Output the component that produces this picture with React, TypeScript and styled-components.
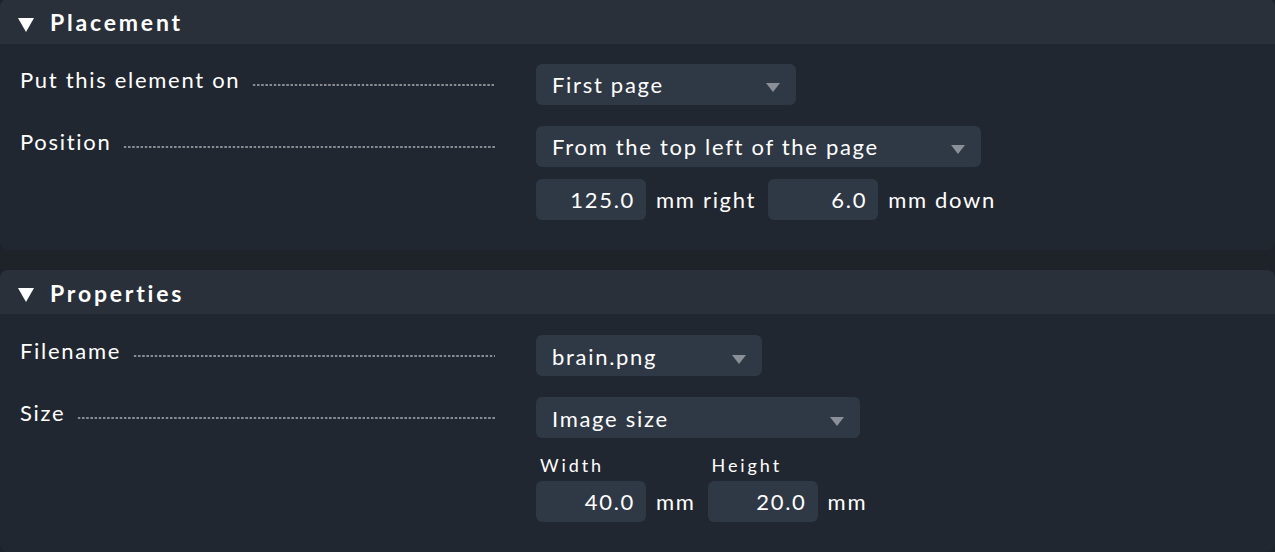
import React from 'react';
import styled, { createGlobalStyle } from 'styled-components';

const GlobalStyle = createGlobalStyle`
    html, body {
        margin: 0;
        padding: 0;
        background: #1e2229;
    }
    body {
        font-family: Lato, 'Open Sans', sans-serif;
        color: #ffffff;
    }
`;

const Page = styled.main`
    display: flex;
    flex-direction: column;
    gap: 20px;
    width: 1275px;
    height: 553px;
    margin-top: -1px;
    overflow: hidden;
`;

const Section = styled.section`
    display: flex;
    flex-direction: column;
    background: #212730;
    border-radius: 8px;
    overflow: hidden;
`;

const Header = styled.div`
    display: flex;
    align-items: center;
    gap: 16px;
    height: 45px;
    box-sizing: border-box;
    padding: 2px 0 0 18px;
    background: #29303a;
    font-size: 23px;
    font-weight: 700;
    letter-spacing: 2.8px;
`;

const Caret = styled.span`
    width: 0;
    height: 0;
    margin-top: 5px;
    border-left: 8px solid transparent;
    border-right: 8px solid transparent;
    border-top: 14px solid #ffffff;
`;

const Body = styled.div<{ $top: number }>`
    display: flex;
    flex-direction: column;
    gap: 21px;
    padding: ${p => p.$top}px 0 30px 20px;
`;

const Row = styled.div`
    display: flex;
    align-items: flex-start;
`;

const Label = styled.div`
    display: flex;
    align-items: baseline;
    gap: 12px;
    width: 475px;
    padding-top: 2px;
    font-size: 22px;
    letter-spacing: 1.7px;
    white-space: nowrap;
`;

const Leader = styled.span`
    flex: 1;
    height: 2px;
    transform: translateY(-2px);
    background-image: radial-gradient(circle, #878b92 1px, transparent 1.4px);
    background-size: 4.2px 2px;
`;

const Value = styled.div`
    display: flex;
    flex-direction: column;
    gap: 12px;
    margin-left: 41px;
`;

const Select = styled.div<{ $width: number }>`
    display: flex;
    align-items: center;
    justify-content: space-between;
    width: ${p => p.$width}px;
    height: 41px;
    box-sizing: border-box;
    padding: 1px 16px 0;
    background: #2f3845;
    border-radius: 6px;
    font-size: 22px;
    letter-spacing: 1.7px;
    white-space: nowrap;
`;

const Arrow = styled.span`
    flex: none;
    width: 0;
    height: 0;
    margin-top: 6px;
    border-left: 7px solid transparent;
    border-right: 7px solid transparent;
    border-top: 9px solid #8b9098;
`;

const Inline = styled.div`
    display: flex;
    align-items: center;
    gap: 10px;

    & > span + div {
        margin-left: 2px;
    }
`;

const Number = styled.div`
    width: 110px;
    height: 41px;
    box-sizing: border-box;
    padding-right: 11px;
    line-height: 42px;
    text-align: right;
    background: #2f3845;
    border-radius: 6px;
    font-size: 22px;
    letter-spacing: 1.7px;
`;

const Unit = styled.span`
    font-size: 22px;
    letter-spacing: 1.7px;
    white-space: nowrap;
`;

const SizeGrid = styled.div`
    display: grid;
    grid-template-columns: auto auto auto auto;
    justify-content: start;
    column-gap: 10px;
    row-gap: 5px;
    margin-top: 4px;
`;

const SubLabel = styled.span`
    grid-column: span 2;
    padding-left: 4px;
    font-size: 18px;
    letter-spacing: 2.9px;
`;

const GridUnit = styled(Unit)`
    align-self: center;
    margin-right: 2px;
`;

const FormRow = ({ label, children }: { label: string; children: React.ReactNode }) => (
    <Row>
        <Label>
            {label}
            <Leader />
        </Label>
        <Value>{children}</Value>
    </Row>
);

const Dropdown = ({ text, width }: { text: string; width: number }) => (
    <Select $width={width}>
        {text}
        <Arrow />
    </Select>
);

const App = () => {
    return (
        <Page>
            <GlobalStyle />
            <Section>
                <Header>
                    <Caret />
                    Placement
                </Header>
                <Body $top={20}>
                    <FormRow label="Put this element on">
                        <Dropdown text="First page" width={260} />
                    </FormRow>
                    <FormRow label="Position">
                        <Dropdown text="From the top left of the page" width={445} />
                        <Inline>
                            <Number>125.0</Number>
                            <Unit>mm right</Unit>
                            <Number>6.0</Number>
                            <Unit>mm down</Unit>
                        </Inline>
                    </FormRow>
                </Body>
            </Section>
            <Section>
                <Header>
                    <Caret />
                    Properties
                </Header>
                <Body $top={21}>
                    <FormRow label="Filename">
                        <Dropdown text="brain.png" width={226} />
                    </FormRow>
                    <FormRow label="Size">
                        <Dropdown text="Image size" width={324} />
                        <SizeGrid>
                            <SubLabel>Width</SubLabel>
                            <SubLabel>Height</SubLabel>
                            <Number>40.0</Number>
                            <GridUnit>mm</GridUnit>
                            <Number>20.0</Number>
                            <GridUnit>mm</GridUnit>
                        </SizeGrid>
                    </FormRow>
                </Body>
            </Section>
        </Page>
    );
};

export default App;
